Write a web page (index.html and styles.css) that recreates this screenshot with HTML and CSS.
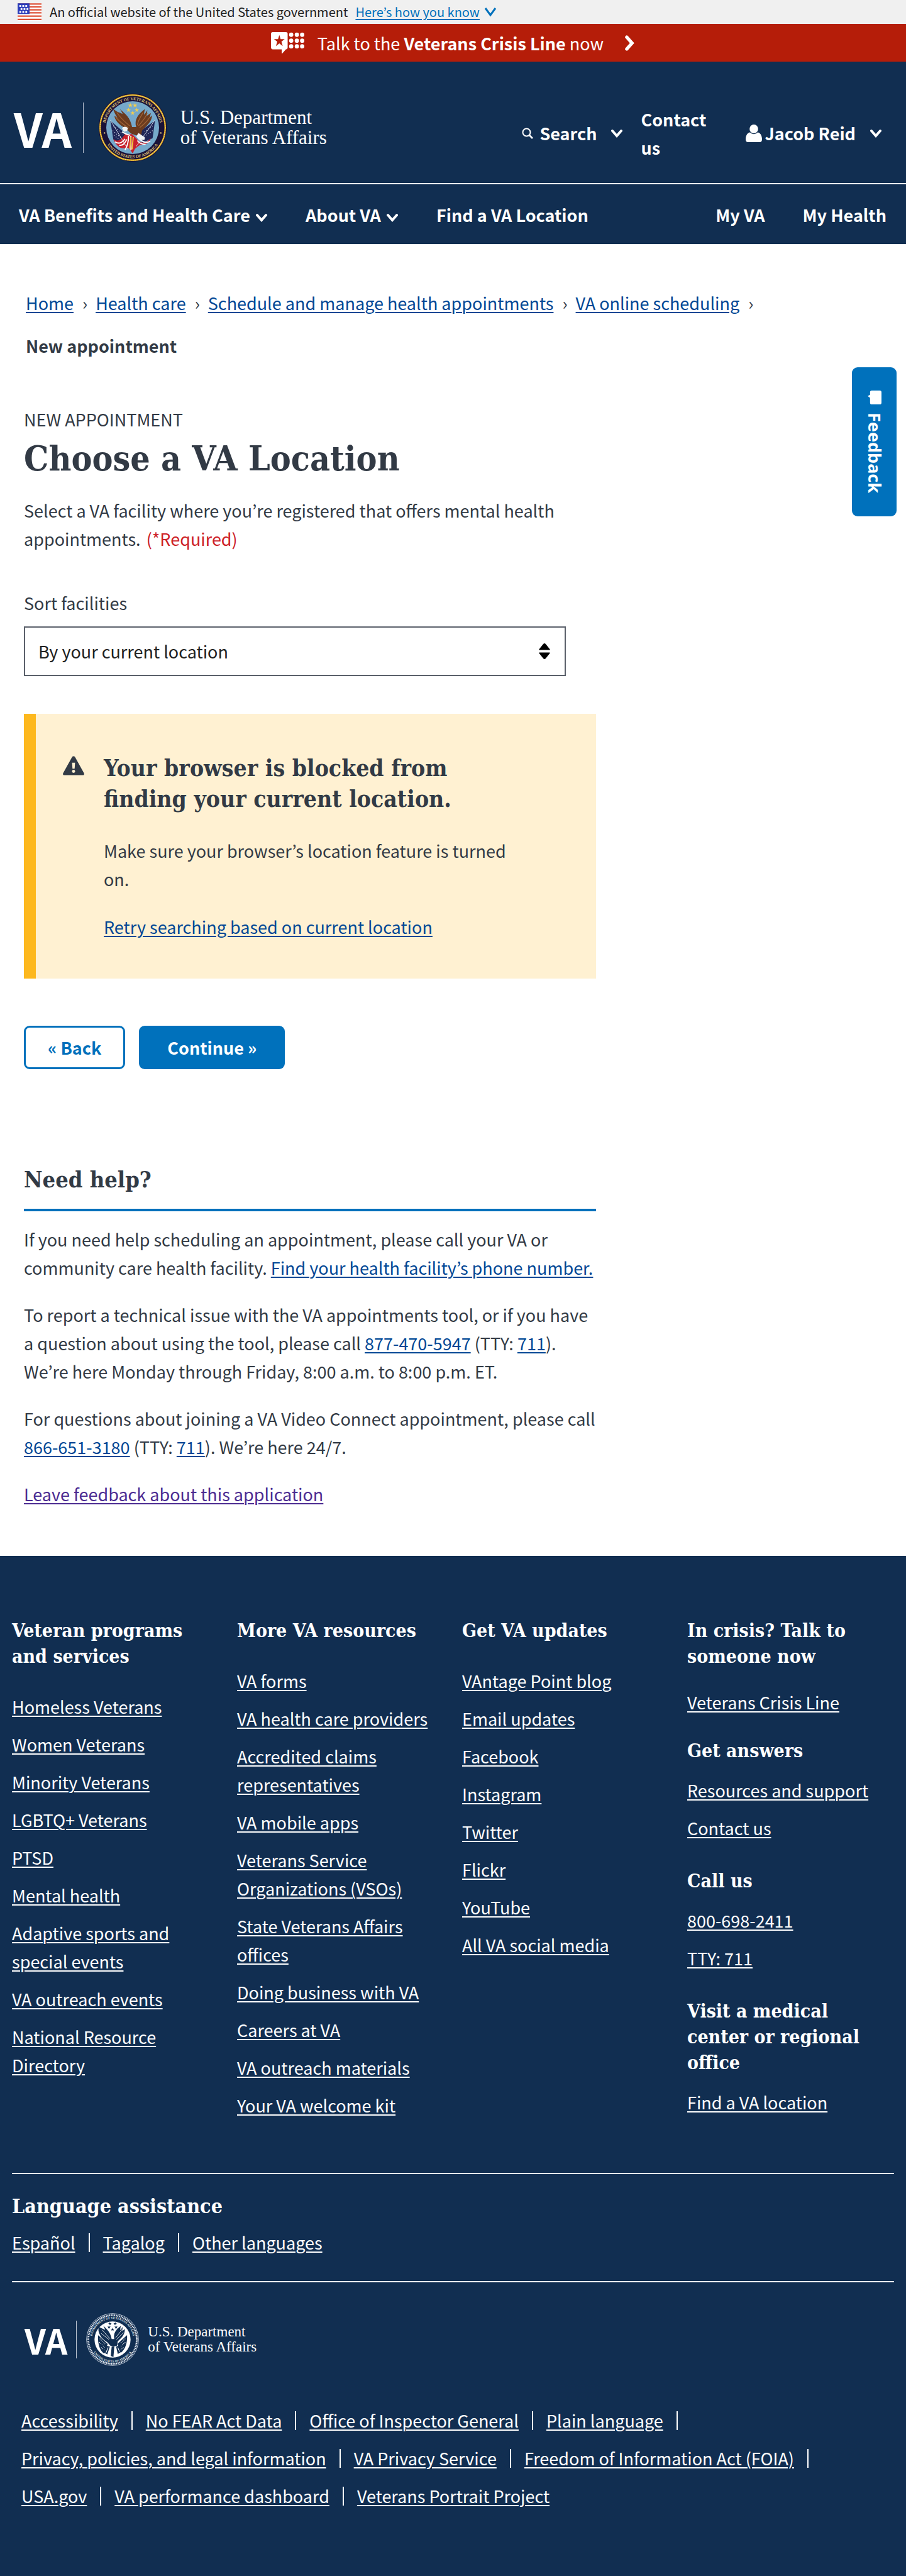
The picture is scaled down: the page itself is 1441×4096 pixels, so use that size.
FILE: index.html
```html
<!DOCTYPE html>
<html lang="en">
<head>
<meta charset="utf-8">
<meta name="viewport" content="width=device-width, initial-scale=1">
<title>Choose a VA Location | Veterans Affairs</title>
<link rel="stylesheet" href="styles.css">
</head>
<body>
<svg class="defs" width="0" height="0" aria-hidden="true">
  <defs>
    <path id="arc-top" d="M13 60A47 47 0 0 1 107 60"/>
    <path id="arc-bottom" d="M8 60A52 52 0 0 0 112 60"/>
    <path id="star" d="M0-4 1-1.2 4-1.2 1.6.6 2.5 3.4 0 1.7-2.5 3.4-1.6.6-4-1.2-1-1.2z"/>
    <symbol id="chevron" viewBox="0 0 20 14"><path d="M3 3l7 8 7-8" fill="none" stroke="currentColor" stroke-width="4" stroke-linecap="round"/></symbol>
  </defs>
</svg>

<div class="gov-banner">
  <svg class="flag" viewBox="0 0 40 29" aria-hidden="true">
    <path fill="#fff" d="M0 0h40v29H0z"/>
    <path stroke="#dd5238" stroke-width="2.4" d="M0 1.2h40M0 6h40M0 11h40M0 16h40M0 21.500h40M0 27h40"/>
    <path fill="#2a3dbb" d="M0 0h20v18H0z"/>
    <path stroke="#fff" stroke-width="3" stroke-dasharray="3 2" d="M3 4.500h13M5 9.500h13M3 14.500h13"/>
  </svg>
  <span>An official website of the United States government</span>
  <button type="button" class="know">Here’s how you know</button>
  <svg class="know-chevron" viewBox="0 0 20 16" aria-hidden="true"><path d="M2 2l8 11 8-11" fill="none" stroke="#0071bc" stroke-width="3"/></svg>
</div>

<a class="crisis" href="#crisis">
  <svg class="crisis-icon" viewBox="0 0 56 36" aria-hidden="true">
    <path fill="#fff" d="M3 0h22a3 3 0 0 1 3 3v23a3 3 0 0 1-3 3l-6 7h-1v-7H3a3 3 0 0 1-3-3V3a3 3 0 0 1 3-3z"/>
    <path fill="#b51d09" d="M14 5l2.200 7H23l-5.500 4.200 2.200 7.300L14 19l-5.700 4.500 2.200-7.300L5 12h6.800z"/>
    <g fill="#fff"><circle cx="34" cy="4.500" r="3.600"/><circle cx="43.500" cy="4.500" r="3.600"/><circle cx="52.500" cy="4.500" r="3.600"/><circle cx="34" cy="14.500" r="3.600"/><circle cx="43.500" cy="14.500" r="3.600"/><circle cx="52.500" cy="14.500" r="3.600"/><circle cx="34" cy="24" r="3.600"/><circle cx="43.500" cy="24" r="3.600"/><circle cx="52.500" cy="24" r="3.600"/></g>
  </svg>
  <span>Talk to the <b>Veterans Crisis Line</b> now</span>
  <svg class="crisis-arrow" viewBox="0 0 17 26" aria-hidden="true"><path d="M3 3l9 10-9 10" fill="none" stroke="#fff" stroke-width="5.500" stroke-linecap="round"/></svg>
</a>

<header class="site-header">
  <div class="top">
    <a class="logo" href="#home">
      <span class="logo-va">VA</span>
      <svg class="seal" viewBox="0 0 120 120" role="img" aria-label="Seal">
        <circle cx="60" cy="60" r="58" fill="#1a1338"/>
        <circle cx="60" cy="60" r="55.500" fill="none" stroke="#d9a520" stroke-width="2.600"/>
        <circle cx="60" cy="60" r="55.500" fill="none" stroke="#f7dc74" stroke-width="1.200" stroke-dasharray="2 1.500"/>
        <circle cx="60" cy="60" r="45" fill="#76a9cb"/>
        <g class="seal-text" fill="#e3c878">
          <text text-anchor="middle"><textPath href="#arc-top" startOffset="50%">DEPARTMENT OF VETERANS AFFAIRS</textPath></text>
          <text text-anchor="middle"><textPath href="#arc-bottom" startOffset="50%">UNITED STATES OF AMERICA</textPath></text>
        </g>
        <circle cx="12" cy="69" r="1.300" fill="#e3c878"/><circle cx="108" cy="69" r="1.300" fill="#e3c878"/>
        <path fill="#1f2557" d="M22 48l27 23-6 20-16-11z"/>
        <path fill="#1f2557" d="M98 48L70 68l6 18 18-8z"/>
        <path d="M27 57l16 14M26 65l15 13M28 73l13 10M94 57L80 67M94 65L80 75" stroke="#dfe6f5" stroke-width="1.200" stroke-dasharray="1.200 3"/>
        <path fill="#c8202c" d="M27 79c9 8 16-2 20-8l12 0 8 8c9 12 18 5 24-1-3 9-10 12-18 11l-9 7-4 8-6-9-8 0c-9 1-15-6-19-16z"/>
        <path d="M30 84c7 5 13 1 17-5M37 90c7 1 10-4 13-10M53 74c0 8-1 16-6 24M57 74v24M90 83c-7 4-12 2-17-2M82 88c-6 1-10-1-14-6M42 67c4 3 8 5 14 6" fill="none" stroke="#fff" stroke-width="2"/>
        <path d="M22 47l30 50M98 47L66 92" stroke="#d5dbe6" stroke-width="1"/>
        <path fill="#6b3b1f" d="M28 29c6 5 10 5 15 8-1-4-4-7-5-9 9 8 18 14 21 31l7 0c-4-13 4-23 15-31-1 4-2 7-1 10l5-8-1 10 7-5-2 8 4-4c0 11-10 18-17 26l-2 10-8-2-9-3-9-9c-13-6-19-16-19-21l5 3c-4-6-6-10-7-14z"/>
        <path d="M33 34c7 11 14 16 22 23M31 42c7 8 13 13 22 18M85 35c-3 9-9 14-15 22M89 42c-4 8-10 12-17 18M78 34c-4 7-9 13-10 22" fill="none" stroke="#a06437" stroke-width="1.400"/>
        <path fill="#f4f4f4" d="M42 61c3-5 9-2 10 0l-2 5-5 1z"/><path fill="#f0f3f7" d="M70 69l11 8-1 4-9 0-5-6z"/>
        <path d="M57 76l-2 20M61 76l-2 21" stroke="#efc341" stroke-width="2"/>
        <g fill="#f4ce4c"><use href="#star" x="56" y="22"/><use href="#star" x="64" y="22"/><use href="#star" x="53" y="30"/><use href="#star" x="67" y="30"/><use href="#star" x="60" y="35"/></g>
      </svg>
      <span class="logo-name">U.S. Department<br>of Veterans Affairs</span>
    </a>
    <div class="tools">
      <button type="button" class="tool search">
        <svg class="i-search" viewBox="0 0 18 18" aria-hidden="true"><circle cx="7.500" cy="7.500" r="6" fill="none" stroke="#fff" stroke-width="2"/><path d="M12 12l5 5" stroke="#fff" stroke-width="2.600"/></svg>
        Search
        <svg class="chev"><use href="#chevron"/></svg>
      </button>
      <a class="contact" href="#contact">Contact us</a>
      <button type="button" class="tool user">
        <svg class="i-user" viewBox="0 0 26 28" aria-hidden="true"><ellipse cx="13" cy="7" rx="6.800" ry="7" fill="#fff"/><path fill="#fff" d="M7 12.500c3.500 3.600 8.500 3.600 12 0 4 0 7 5 7 11 0 3-1.500 4.500-3.500 4.500h-19C1.500 28 0 26.500 0 23.500c0-6 3-11 7-11z"/></svg>
        Jacob Reid
        <svg class="chev"><use href="#chevron"/></svg>
      </button>
    </div>
  </div>
  <nav class="main-nav" aria-label="Main">
    <button type="button">VA Benefits and Health Care <svg class="chev"><use href="#chevron"/></svg></button>
    <button type="button">About VA <svg class="chev"><use href="#chevron"/></svg></button>
    <a href="#find">Find a VA Location</a>
    <a class="my-va" href="#myva">My VA</a>
    <a href="#health">My Health</a>
  </nav>
</header>

<nav class="breadcrumbs" aria-label="Breadcrumb">
  <ol>
    <li><a href="#home">Home</a></li>
    <li><a href="#care">Health care</a></li>
    <li><a href="#schedule">Schedule and manage health appointments</a></li>
    <li><a href="#online">VA online scheduling</a></li>
    <li aria-current="page">New appointment</li>
  </ol>
</nav>

<main class="content">
  <p class="eyebrow">NEW APPOINTMENT</p>
  <h1>Choose a VA Location</h1>
  <p class="intro">Select a VA facility where you’re registered that offers mental health appointments. <span class="required">(*Required)</span></p>
  <label for="sort">Sort facilities</label>
  <div class="select">
    <select id="sort"><option>By your current location</option></select>
    <svg viewBox="0 0 20 28" aria-hidden="true"><path d="M1 11L8 2q2-2 4 0l7 9q1 1-1 1H2q-2 0-1-1zM1 17l7 9q2 2 4 0l7-9q1-1-1-1H2q-2 0-1 1z"/></svg>
  </div>
  <section class="alert">
    <svg viewBox="0 0 36 32" aria-hidden="true"><path fill="#323a45" d="M15.500 1.500c1-2 4-2 5 0l15 27c1 2 0 3.500-2 3.500h-31c-2 0-3-1.500-2-3.500z"/><path fill="#fff1d2" d="M15.500 11h5l-.7 10h-3.600z"/><circle cx="18" cy="25.500" r="2.600" fill="#fff1d2"/></svg>
    <div>
      <h2>Your browser is blocked from finding your current location.</h2>
      <p>Make sure your browser’s location feature is turned on.</p>
      <p class="retry"><a href="#retry">Retry searching based on current location</a></p>
    </div>
  </section>
  <div class="actions">
    <button type="button" class="back">« Back</button>
    <button type="button" class="continue">Continue »</button>
  </div>
  <section class="help">
    <h2>Need help?</h2>
    <p>If you need help scheduling an appointment, please call your VA or community care health facility. <a href="#phone">Find your health facility’s phone number.</a></p>
    <p>To report a technical issue with the VA appointments tool, or if you have a question about using the tool, please call <a href="#t1">877-470-5947</a> (TTY: <a href="#t2">711</a>). We’re here Monday through Friday, 8:00 a.m. to 8:00 p.m. ET.</p>
    <p>For questions about joining a VA Video Connect appointment, please call <a href="#t3">866-651-3180</a> (TTY: <a href="#t4">711</a>). We’re here 24/7.</p>
    <p><a class="seen" href="#feedback">Leave feedback about this application</a></p>
  </section>
</main>

<footer class="site-footer">
  <div class="columns">
    <section>
      <h2>Veteran programs and services</h2>
      <ul>
        <li><a href="#f">Homeless Veterans</a></li>
        <li><a href="#f">Women Veterans</a></li>
        <li><a href="#f">Minority Veterans</a></li>
        <li><a href="#f">LGBTQ+ Veterans</a></li>
        <li><a href="#f">PTSD</a></li>
        <li><a href="#f">Mental health</a></li>
        <li><a href="#f">Adaptive sports and special events</a></li>
        <li><a href="#f">VA outreach events</a></li>
        <li><a href="#f">National Resource Directory</a></li>
      </ul>
    </section>
    <section>
      <h2>More VA resources</h2>
      <ul>
        <li><a href="#f">VA forms</a></li>
        <li><a href="#f">VA health care providers</a></li>
        <li><a href="#f">Accredited claims representatives</a></li>
        <li><a href="#f">VA mobile apps</a></li>
        <li><a href="#f">Veterans Service Organizations (VSOs)</a></li>
        <li><a href="#f">State Veterans Affairs offices</a></li>
        <li><a href="#f">Doing business with VA</a></li>
        <li><a href="#f">Careers at VA</a></li>
        <li><a href="#f">VA outreach materials</a></li>
        <li><a href="#f">Your VA welcome kit</a></li>
      </ul>
    </section>
    <section>
      <h2>Get VA updates</h2>
      <ul>
        <li><a href="#f">VAntage Point blog</a></li>
        <li><a href="#f">Email updates</a></li>
        <li><a href="#f">Facebook</a></li>
        <li><a href="#f">Instagram</a></li>
        <li><a href="#f">Twitter</a></li>
        <li><a href="#f">Flickr</a></li>
        <li><a href="#f">YouTube</a></li>
        <li><a href="#f">All VA social media</a></li>
      </ul>
    </section>
    <section class="support">
      <h2>In crisis? Talk to someone now</h2>
      <ul class="first"><li><a href="#f">Veterans Crisis Line</a></li></ul>
      <h2>Get answers</h2>
      <ul>
        <li><a href="#f">Resources and support</a></li>
        <li><a href="#f">Contact us</a></li>
      </ul>
      <h2 class="spaced">Call us</h2>
      <ul>
        <li><a href="#f">800-698-2411</a></li>
        <li><a href="#f">TTY: 711</a></li>
      </ul>
      <h2 class="spaced">Visit a medical center or regional office</h2>
      <ul><li><a href="#f">Find a VA location</a></li></ul>
    </section>
  </div>
  <section class="language">
    <h2>Language assistance</h2>
    <ul class="piped">
      <li><a href="#f">Español</a></li>
      <li><a href="#f">Tagalog</a></li>
      <li><a href="#f">Other languages</a></li>
    </ul>
  </section>
  <a class="logo logo-small" href="#home">
    <span class="logo-va">VA</span>
    <svg class="seal" viewBox="0 0 120 120" role="img" aria-label="Seal">
      <circle cx="60" cy="60" r="59" fill="#112e51" stroke="#dfe5ee" stroke-width="1.200"/>
      <circle cx="60" cy="60" r="55" fill="none" stroke="#dfe5ee" stroke-width="4" stroke-dasharray="2.400 1.400"/>
      <circle cx="60" cy="60" r="41" fill="#fff"/>
      <g class="seal-text" fill="#dfe5ee">
        <text text-anchor="middle"><textPath href="#arc-top" startOffset="50%">DEPARTMENT OF VETERANS AFFAIRS</textPath></text>
        <text text-anchor="middle"><textPath href="#arc-bottom" startOffset="50%">UNITED STATES OF AMERICA</textPath></text>
      </g>
      <path fill="#112e51" d="M27 50l22 20-8 22c-9-6-15-20-14-42zM93 50L71 70l8 20c10-8 15-22 14-40z"/>
      <path d="M31 58l12 12M30 66l12 12M34 78l8 6M89 58L78 68M89 66L78 76M85 78l-7 6" stroke="#fff" stroke-width="1.600" stroke-dasharray="1.600 2.400"/>
      <path fill="#112e51" d="M28 30c6 5 10 5 15 8-1-4-3-7-4-9 9 8 16 14 19 30l6 0c-3-13 4-22 15-30-1 4-2 7-1 10l5-8-1 10 6-5c0 14-8 20-16 28l-2 10-8 2-7-2-7-8c-12-7-18-16-20-26z"/>
      <path d="M36 38l18 20M34 46l18 14M82 37L67 56M85 44L69 60" stroke="#fff" stroke-width="1.200"/>
      <path fill="#112e51" d="M46 74l8 2-6 18-8-5zM58 76h6l-2 24-6-3zM68 76l6-2 6 14-8 5z"/>
      <path d="M50 78l-5 12M72 78l4 10" stroke="#fff" stroke-width="1.500"/>
      <g fill="#112e51"><use href="#star" x="54" y="24"/><use href="#star" x="66" y="24"/><use href="#star" x="52" y="32"/><use href="#star" x="68" y="32"/><use href="#star" x="60" y="37"/></g>
    </svg>
    <span class="logo-name">U.S. Department<br>of Veterans Affairs</span>
  </a>
  <ul class="piped legal">
    <li><a href="#f">Accessibility</a></li>
    <li><a href="#f">No FEAR Act Data</a></li>
    <li><a href="#f">Office of Inspector General</a></li>
    <li><a href="#f">Plain language</a></li>
    <li><a href="#f">Privacy, policies, and legal information</a></li>
    <li><a href="#f">VA Privacy Service</a></li>
    <li><a href="#f">Freedom of Information Act (FOIA)</a></li>
    <li><a href="#f">USA.gov</a></li>
    <li><a href="#f">VA performance dashboard</a></li>
    <li><a href="#f">Veterans Portrait Project</a></li>
  </ul>
</footer>

<button type="button" class="feedback">
  <svg viewBox="0 0 23 24" aria-hidden="true"><path fill="#fff" d="M7 0h13q3 0 3 3v17q0 3-3 3H7q-3 0-3-3v-8L0 9l4-2V3q0-3 3-3z"/></svg>
  Feedback
</button>
</body>
</html>
```
FILE: styles.css
```css
* { box-sizing: border-box; }

body {
  margin: 0;
  position: relative;
  background: #fff;
  color: #323a45;
  font: 27px/45px "Noto Sans CJK KR", "Noto Sans", sans-serif;
}

h1, h2, p, ul, ol { margin: 0; padding: 0; }
ul, ol { list-style: none; }
svg { display: block; flex: none; }
.defs { position: absolute; }

h1, h2 { font-family: "DejaVu Serif Condensed", "DejaVu Serif", serif; font-weight: 700; }

a {
  color: #004795;
  text-decoration: underline;
  text-decoration-thickness: 2px;
  text-underline-offset: 3px;
}

button { font: inherit; color: inherit; background: none; border: 0; padding: 0; cursor: pointer; }

/* Government banner */
.gov-banner {
  display: flex;
  align-items: center;
  height: 38px;
  padding-left: 28px;
  background: #f0f0f0;
  color: #212121;
  font-size: 20px;
  line-height: 38px;
}
.flag { width: 38px; height: 28px; margin-right: 13px; }
.know {
  margin-left: 12px;
  color: #0071bc;
  text-decoration: underline;
  text-decoration-thickness: 2px;
  text-underline-offset: 3px;
}
.know-chevron { width: 20px; height: 16px; margin-left: 7px; }

/* Crisis line */
.crisis {
  display: flex;
  align-items: center;
  justify-content: center;
  height: 60px;
  background: #b51d09;
  color: #fff;
  text-decoration: none;
}
.crisis-icon { width: 53px; height: 34px; margin-right: 21px; }
.crisis-arrow { width: 16px; height: 25px; margin-left: 34px; }

/* Header */
.site-header { background: #112e51; color: #fff; font-weight: 700; }
.site-header a { color: #fff; text-decoration: none; }
.top {
  display: flex;
  justify-content: space-between;
  height: 195px;
  padding: 17px 38px 0 22px;
  border-bottom: 2px solid #fff;
}
.logo { display: flex; align-items: center; color: #fff; text-decoration: none; }
.logo-va {
  padding-right: 18px;
  border-right: 1px solid #b9c2d0;
  font-size: 74px;
  font-weight: 700;
  line-height: 80px;
}
.seal { width: 112px; height: 112px; margin: 0 20px 0 22px; }
.seal-text { font: 700 7px "Liberation Serif", serif; }
.logo-name { font: 400 31px/32px "Liberation Serif", serif; }

.tools { display: flex; align-items: center; padding-top: 17px; }
.tool { display: flex; align-items: center; line-height: 45px; }
.chev { display: inline-block; width: 20px; height: 14px; }
.i-search { width: 18px; height: 18px; margin-right: 10px; }
.i-user { width: 26px; height: 28px; margin-right: 4px; }
.tool .chev { margin-left: 22px; }
.contact { width: 110px; margin: 0 57px 0 28px; }

.main-nav { display: flex; align-items: center; height: 95px; padding: 2px 31px 0 30px; gap: 60px; }
.main-nav .chev { margin-left: 2px; }
.my-va { margin-left: auto; }

/* Breadcrumbs */
.breadcrumbs { padding: 60px 41px 0; }
.breadcrumbs ol { display: flex; flex-wrap: wrap; }
.breadcrumbs li { line-height: 68px; font-weight: 700; }
.breadcrumbs a { font-weight: 400; }
.breadcrumbs li:not(:last-child)::after { content: "›"; margin: 0 13px 0 14px; color: #323a45; font-weight: 400; }

/* Main column */
.content { max-width: 948px; padding: 60px 0 76px 38px; }
h1 { margin-top: 10px; font-size: 55px; line-height: 60px; }
.intro { margin: 30px 60px 57px 0; }
.required { margin-left: 3px; color: #cd2026; }
label { display: block; margin-bottom: 15px; }
.select { position: relative; margin-right: 48px; }
select {
  display: block;
  width: 100%;
  height: 79px;
  padding: 0 60px 0 21px;
  border: 2px solid #5b616b;
  border-radius: 0;
  appearance: none;
  background: #fff;
  color: #212121;
  font: inherit;
}
.select svg { position: absolute; top: 26px; right: 24px; width: 20px; height: 27px; pointer-events: none; }

.alert {
  display: flex;
  gap: 31px;
  margin-top: 60px;
  padding: 62px 115px 60px 43px;
  border-left: 19px solid #fdb81e;
  background: #fff1d2;
}
.alert svg { width: 34px; height: 31px; margin-top: 5px; }
.alert h2 { margin-bottom: 35px; font-size: 37px; line-height: 49px; }
.retry { margin-top: 31px; }

.actions { display: flex; gap: 22px; margin-top: 75px; }
.actions button { height: 69px; border-radius: 9px; font-weight: 700; }
.back { padding: 0 35px; border: 3px solid #0071bc; color: #0071bc; }
.continue { padding: 0 45px; background: #0071bc; color: #fff; }

.help h2 {
  margin: 153px 0 22px;
  padding-bottom: 24px;
  border-bottom: 4px solid #0071bc;
  font-size: 36px;
  line-height: 45px;
}
.help p + p { margin-top: 30px; }
.seen { color: #4c2c92; }

/* Footer */
.site-footer { padding: 98px 19px; background: #112e51; color: #fff; }
.site-footer a { color: #fff; }
.site-footer h2 { font-size: 30px; line-height: 41px; }
.columns { display: grid; grid-template-columns: repeat(4, 1fr); gap: 29px; padding-bottom: 70px; }
.columns li { margin-bottom: 15px; }
.columns h2 + ul { margin-top: 37px; }
.support h2 + ul { margin-top: 20px; }
.support h2 + ul.first { margin-top: 30px; }
.support ul + h2 { margin-top: 34px; }
.support ul + h2.spaced { margin-top: 41px; }
.language { padding: 31px 0 39px; border: solid #fff; border-width: 2px 0; }
.site-footer .language h2 { margin-bottom: 14px; font-size: 32px; }
.piped { display: flex; flex-wrap: wrap; }
.piped li { display: flex; align-items: center; }
.piped li:not(:last-child)::after { content: ""; width: 2px; height: 30px; margin: 0 21px; background: #fff; }
.legal { margin: 57px 15px 0; line-height: 60px; }

.site-footer .logo { margin-top: 49px; padding-left: 20px; text-decoration: none; }
.logo-small .logo-va { padding-right: 14px; font-size: 55px; line-height: 60px; }
.logo-small .seal { width: 84px; height: 84px; margin: 0 14px 0 15px; }
.logo-small .logo-name { font-size: 23px; line-height: 24px; }

/* Feedback tab, laid over the page's right edge */
.feedback {
  position: absolute;
  top: 584px;
  right: 15px;
  display: flex;
  align-items: center;
  justify-content: center;
  gap: 12px;
  width: 71px;
  height: 237px;
  border-radius: 9px;
  background: #0071bc;
  color: #fff;
  font: 700 27px/30px "Noto Sans", sans-serif;
  writing-mode: vertical-rl;
}
.feedback svg { width: 22px; height: 23px; }
```
